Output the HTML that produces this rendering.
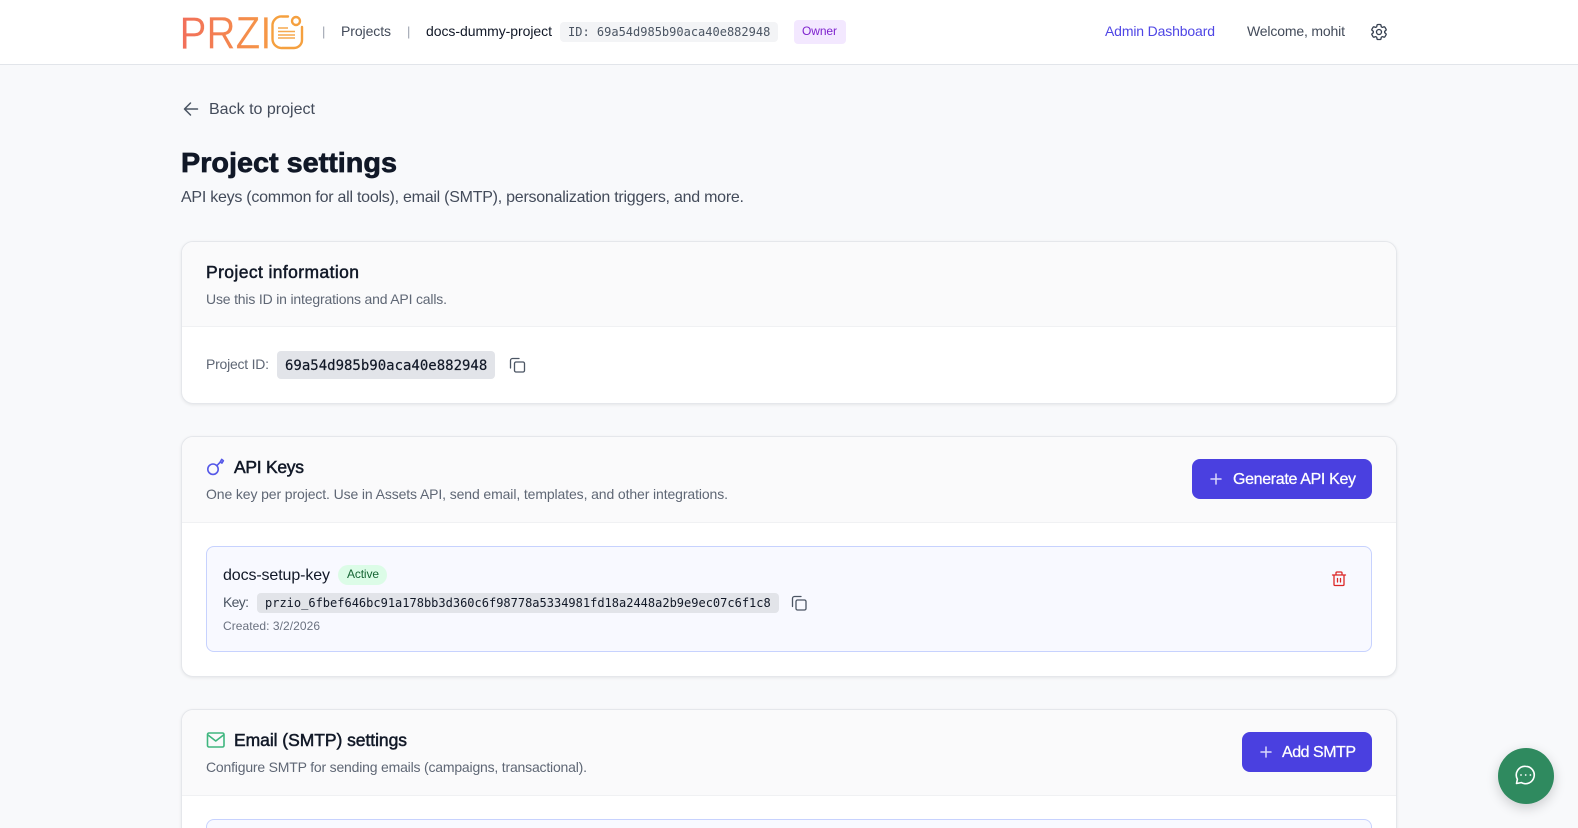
<!DOCTYPE html>
<html lang="en"><head><meta charset="utf-8"><title>Project settings</title>
<style>
html,body{margin:0;padding:0;width:1578px;height:828px;overflow:hidden;background:#f8f9fb}
#page{position:relative;width:1578px;height:828px;overflow:hidden;background:#f8f9fb}
.b{position:absolute;box-sizing:border-box}
.card{left:181px;width:1216px;background:#fff;border:1px solid #e5e7eb;border-radius:12px;box-shadow:0 1px 3px rgba(0,0,0,.08);overflow:hidden}
.hd{position:absolute;left:0;right:0;top:0;background:#fafafb;border-bottom:1px solid #f0f1f3}
.btn{background:#4a40e0;border-radius:8px}
.inner{left:206px;width:1166px;background:#f8f9ff;border:1px solid #c7d2fe;border-radius:8px}
svg{position:absolute;left:0;top:0}
text{font-family:"Liberation Sans",sans-serif;white-space:pre}
.m{font-family:"DejaVu Sans Mono","Liberation Mono",monospace}
.s{stroke:currentColor;stroke-width:.5px}
.i{fill:none;stroke-linecap:round;stroke-linejoin:round}
</style></head><body>
<div id="page">
<div class="b" style="left:0;top:0;width:1578px;height:65px;background:#fff;border-bottom:1px solid #e2e5ea"></div>
<div class="b" style="left:560px;top:22px;width:218px;height:20px;background:#f3f4f6;border-radius:4px"></div>
<div class="b" style="left:794px;top:20px;width:52px;height:24px;background:#f3e8ff;border-radius:4px"></div>

<div class="b card" style="top:241px;height:163px"><div class="hd" style="height:84px"></div></div>
<div class="b" style="left:277px;top:351px;width:218px;height:28px;background:#e2e4e9;border-radius:4px"></div>

<div class="b card" style="top:436px;height:241px"><div class="hd" style="height:85px"></div></div>
<div class="b btn" style="left:1192px;top:459px;width:180px;height:40px"></div>
<div class="b inner" style="top:546px;height:106px"></div>
<div class="b" style="left:338px;top:565px;width:49px;height:20px;background:#dcfce7;border-radius:10px"></div>
<div class="b" style="left:257px;top:593px;width:522px;height:20px;background:#e2e4e9;border-radius:4px"></div>

<div class="b card" style="top:709px;height:119px;border-bottom:0;border-radius:12px 12px 0 0"><div class="hd" style="height:85px"></div></div>
<div class="b btn" style="left:1242px;top:732px;width:130px;height:40px"></div>
<div class="b inner" style="top:819px;height:9px;border-bottom:0;border-radius:8px 8px 0 0"></div>

<div class="b" style="left:1498px;top:748px;width:56px;height:56px;border-radius:50%;background:#2f8a5f;box-shadow:0 4px 12px rgba(0,0,0,.18)"></div>

<svg width="1578" height="828" viewBox="0 0 1578 828" xmlns="http://www.w3.org/2000/svg">
<defs><linearGradient id="g" gradientUnits="userSpaceOnUse" x1="182" y1="0" x2="303" y2="0"><stop offset="0" stop-color="#f26f5a"/><stop offset="1" stop-color="#f7a83e"/></linearGradient></defs>
<!-- logo -->
<text x="179.500" y="48.500" font-size="45" fill="url(#g)" stroke="#fff" stroke-width=".3" textLength="92" lengthAdjust="spacingAndGlyphs">PRZI</text>
<path d="M288 16.500h-6a9 9 0 0 0-9.500 9.500v13a9 9 0 0 0 9.500 9h12a8 8 0 0 0 8-8V27" fill="none" stroke="#f5a03f" stroke-width="2.400" stroke-linecap="round"/>
<circle cx="296" cy="21" r="4" fill="none" stroke="#f5a03f" stroke-width="2.400"/>
<path d="M278 28h10M278 31.500h17M278 35h17M278 38h17" stroke="#f6a94f" stroke-width="1.500"/>
<!-- nav -->
<text x="322" y="36" font-size="13" fill="#9ca3af">|</text>
<text x="341" y="36" font-size="14" fill="#434b5a" textLength="50">Projects</text>
<text x="407" y="36" font-size="13" fill="#9ca3af">|</text>
<text x="426" y="36" font-size="14" fill="#111827" textLength="126">docs-dummy-project</text>
<text class="m" x="568" y="36" font-size="12" fill="#4b5563">ID: 69a54d985b90aca40e882948</text>
<text x="802" y="35" font-size="12" fill="#7e22ce" textLength="35">Owner</text>
<text x="1105" y="36" font-size="14" fill="#4f46e5" textLength="110">Admin Dashboard</text>
<text x="1247" y="36" font-size="14" fill="#434b5a" textLength="98">Welcome, mohit</text>
<g transform="translate(1369 22) scale(.8333)" class="i" stroke="#374151" stroke-width="1.600"><path d="M9.594 3.94c.09-.542.56-.94 1.11-.94h2.593c.55 0 1.02.398 1.11.94l.213 1.281c.063.374.313.686.645.87.074.04.147.083.22.127.324.196.72.257 1.075.124l1.217-.456a1.125 1.125 0 011.37.49l1.296 2.247a1.125 1.125 0 01-.26 1.431l-1.003.827c-.293.24-.438.613-.431.992a6.759 6.759 0 010 .255c-.007.378.138.75.43.99l1.005.828c.424.35.534.954.26 1.43l-1.298 2.247a1.125 1.125 0 01-1.369.491l-1.217-.456c-.355-.133-.75-.072-1.076.124a6.57 6.57 0 01-.22.128c-.331.183-.581.495-.644.869l-.213 1.28c-.09.543-.56.941-1.11.941h-2.594c-.55 0-1.02-.398-1.11-.94l-.213-1.281c-.062-.374-.312-.686-.644-.87a6.52 6.52 0 01-.22-.127c-.325-.196-.72-.257-1.076-.124l-1.217.456a1.125 1.125 0 01-1.369-.49l-1.297-2.247a1.125 1.125 0 01.26-1.431l1.004-.827c.292-.24.437-.613.43-.992a6.932 6.932 0 010-.255c.007-.378-.138-.75-.43-.99l-1.004-.828a1.125 1.125 0 01-.26-1.43l1.297-2.247a1.125 1.125 0 011.37-.491l1.216.456c.356.133.751.072 1.076-.124.072-.044.146-.087.22-.128.332-.183.582-.495.644-.869l.214-1.281z"/><circle cx="12" cy="12" r="3"/></g>
<!-- heading -->
<path class="i" d="M197.500 109H184.500M190.500 103l-6 6 6 6" stroke="#4b5563" stroke-width="1.500"/>
<text x="209" y="114" font-size="16" fill="#434b5a" textLength="106">Back to project</text>
<text class="s" x="181" y="172" font-size="28" font-weight="700" fill="#111827" color="#111827" style="stroke-width:.7px" textLength="216" lengthAdjust="spacingAndGlyphs">Project settings</text>
<text x="181" y="202" font-size="16" fill="#434b5a" textLength="563">API keys (common for all tools), email (SMTP), personalization triggers, and more.</text>
<!-- card 1 -->
<text class="s" x="206" y="278" font-size="17.500" fill="#111827" color="#111827" textLength="153">Project information</text>
<text x="206" y="304" font-size="14" fill="#5f6775" textLength="241">Use this ID in integrations and API calls.</text>
<text x="206" y="369" font-size="14" fill="#5f6775" textLength="63">Project ID:</text>
<text class="m" x="285" y="370" font-size="14" fill="#111827" stroke="#111827" stroke-width=".2">69a54d985b90aca40e882948</text>
<g class="i" stroke="#4b5563" stroke-width="1.300"><rect x="514.500" y="362" width="10" height="10" rx="1.500"/><path d="M510.500 368v-7.500a2 2 0 0 1 2-2h6.500"/></g>
<!-- card 2 -->
<g class="i" stroke="#5558e8" stroke-width="1.600"><circle cx="213" cy="469.200" r="5.200"/><path d="M217 465.500l4-4.200"/><path d="M220.200 462l1.500-2.600 1.700 1.300-1.500 2.400z"/></g>
<text class="s" x="234" y="473" font-size="17.500" fill="#111827" color="#111827" textLength="70">API Keys</text>
<text x="206" y="499" font-size="14" fill="#5f6775" textLength="522">One key per project. Use in Assets API, send email, templates, and other integrations.</text>
<path d="M1216 474v10M1211 479h10" stroke="#d9d7fb" stroke-width="1.500" stroke-linecap="round"/>
<text x="1233" y="484" font-size="16" fill="#fff" stroke="#fff" stroke-width=".25" textLength="123">Generate API Key</text>
<text x="223" y="580" font-size="16" fill="#111827" textLength="107">docs-setup-key</text>
<text x="347" y="578" font-size="12" fill="#166534" textLength="32">Active</text>
<text x="223" y="607" font-size="14" fill="#4b5563" textLength="26">Key:</text>
<text class="m" x="265" y="607" font-size="12" fill="#111827">przio_6fbef646bc91a178bb3d360c6f98778a5334981fd18a2448a2b9e9ec07c6f1c8</text>
<text x="223" y="630" font-size="12" fill="#6b7280" textLength="97">Created: 3/2/2026</text>
<g class="i" stroke="#4b5563" stroke-width="1.300"><rect x="796" y="600" width="10" height="10" rx="1.500"/><path d="M792.500 606.500v-8a2 2 0 0 1 2-2h6.500"/></g>
<g class="i" stroke="#dc2626" stroke-width="1.300"><path d="M1332.500 575h13M1336 575v-2a1 1 0 0 1 1-1h4a1 1 0 0 1 1 1v2M1334 575v9.500a1 1 0 0 0 1 1h8a1 1 0 0 0 1-1V575M1337.500 578.500v3.500M1340.500 578.500v3.500"/></g>
<!-- card 3 -->
<g class="i" stroke="#3fb67f" stroke-width="1.600"><rect x="207.500" y="733" width="16.500" height="14" rx="1.500"/><path d="M208 735l7.750 6 7.750-6"/></g>
<text class="s" x="234" y="746" font-size="17.500" fill="#111827" color="#111827" textLength="173">Email (SMTP) settings</text>
<text x="206" y="772" font-size="14" fill="#5f6775" textLength="381">Configure SMTP for sending emails (campaigns, transactional).</text>
<path d="M1266 747v10M1261 752h10" stroke="#d9d7fb" stroke-width="1.500" stroke-linecap="round"/>
<text x="1282" y="757" font-size="16" fill="#fff" stroke="#fff" stroke-width=".25" textLength="74">Add SMTP</text>
<!-- chat -->
<path class="i" d="M1525.500 766.300a8.700 8.700 0 1 1-4.200 16.300l-4.800.9.900-4.300a8.700 8.700 0 0 1 8.100-12.900z" stroke="#fff" stroke-width="1.600"/>
<circle cx="1521" cy="775" r=".9" fill="#fff"/><circle cx="1525.700" cy="775" r=".9" fill="#fff"/><circle cx="1530.400" cy="775" r=".9" fill="#fff"/>
</svg>
</div>
</body></html>
